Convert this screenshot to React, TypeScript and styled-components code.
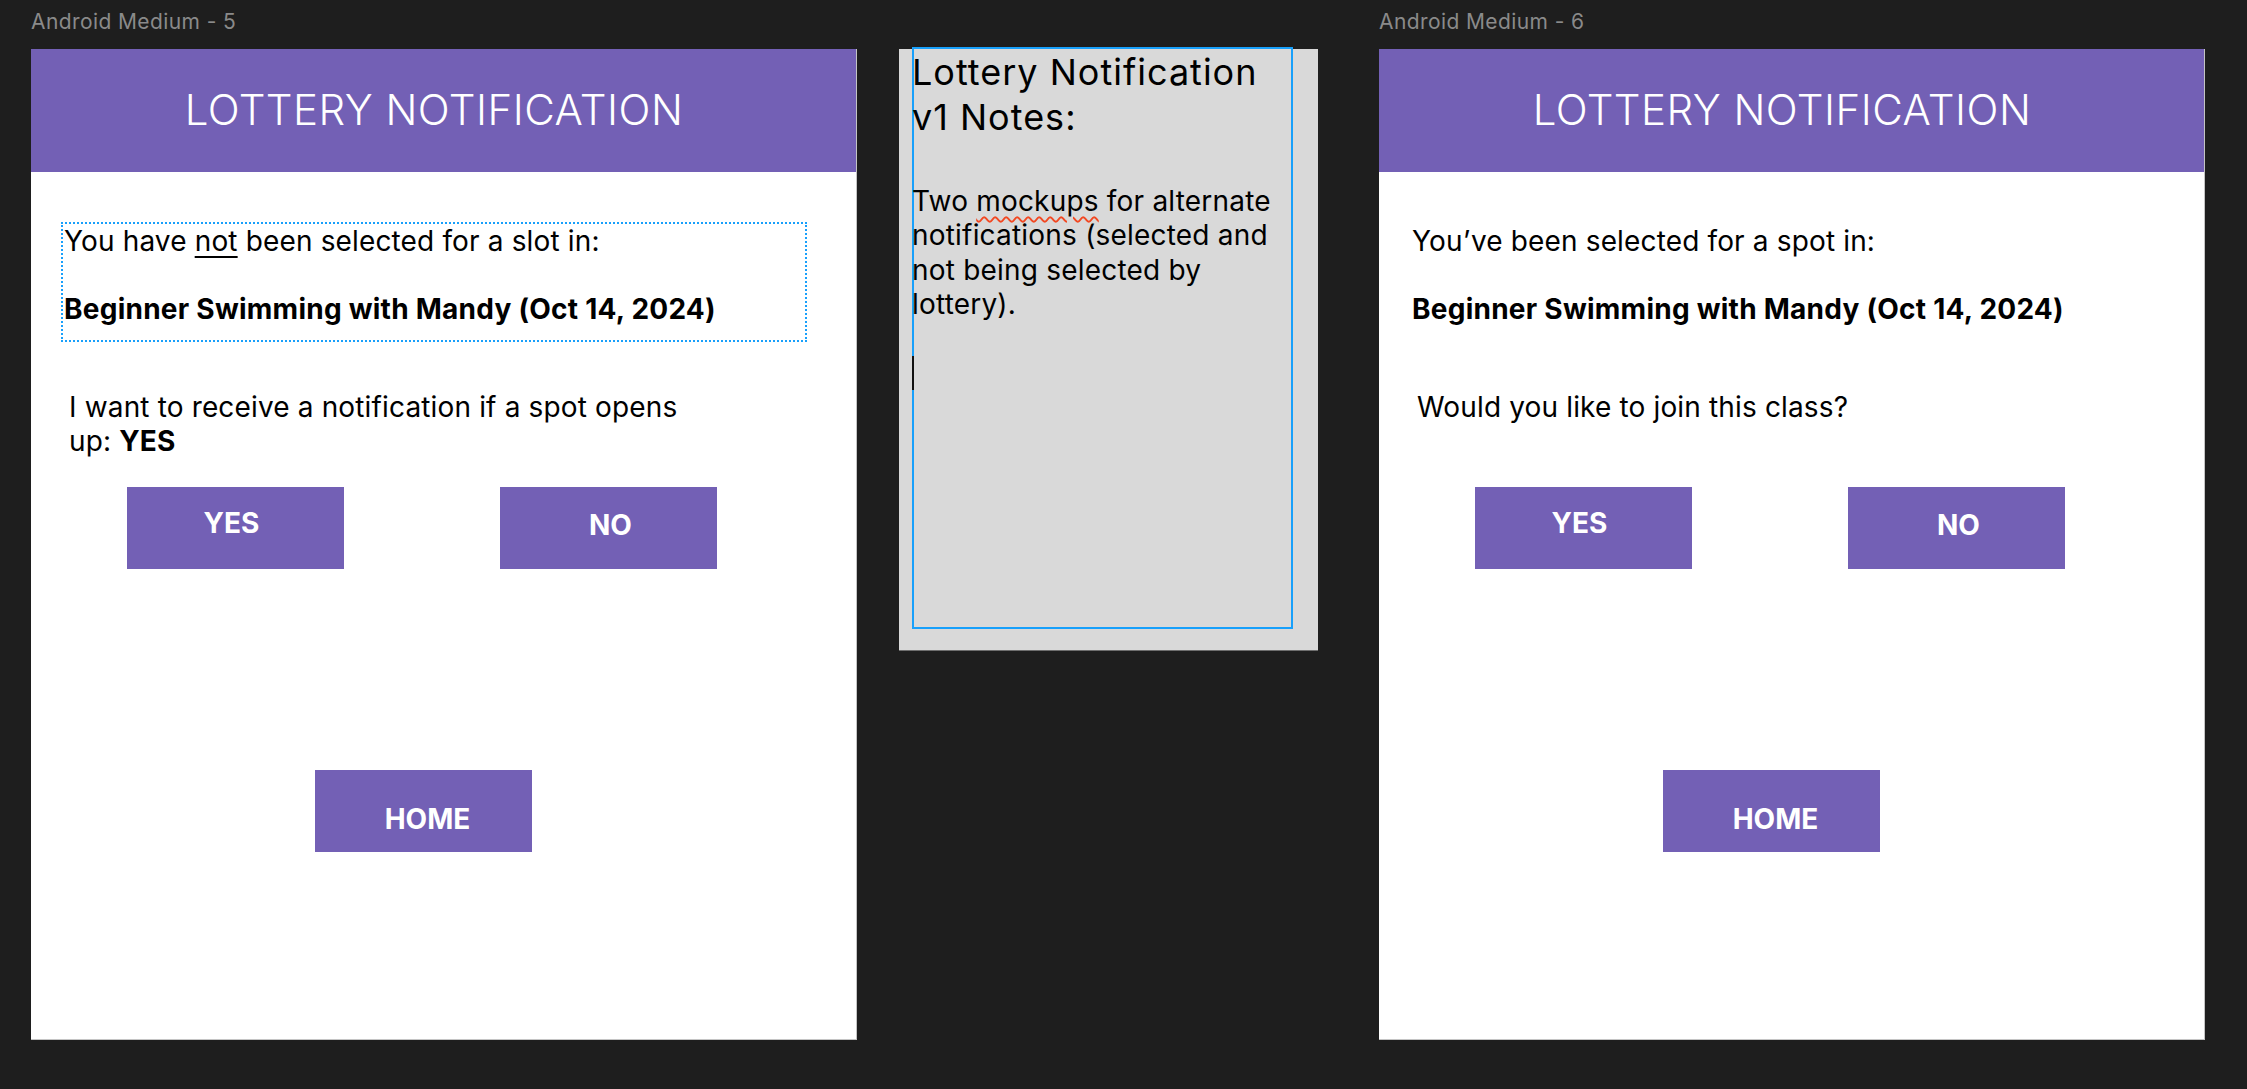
import * as React from 'react';
import styled, { createGlobalStyle } from 'styled-components';

const GlobalStyle = createGlobalStyle`
  html, body {
    margin: 0;
    padding: 0;
    background: #1e1e1e;
  }
  body {
    font-family: Inter, "Noto Sans", sans-serif;
  }
`;

const Canvas = styled.div`
  display: flex;
  align-items: flex-start;
  width: 2247px;
  height: 1089px;
  padding: 9px 0 0 31px;
  box-sizing: border-box;
  overflow: hidden;
`;

const FrameColumn = styled.div<{ $offset?: number }>`
  display: flex;
  flex-direction: column;
  width: 826px;
  margin-left: ${(p) => p.$offset ?? 0}px;
`;

const FrameLabel = styled.div`
  font-size: 21px;
  letter-spacing: 0.4px;
  line-height: 25px;
  color: #8a8a8a;
  margin-bottom: 15px;
`;

const Screen = styled.div`
  display: flex;
  flex-direction: column;
  width: 826px;
  height: 991px;
  background: #fff;
  box-sizing: border-box;
  border-right: 1px solid #c4c4c4;
  border-bottom: 1px solid #c4c4c4;
`;

const AppBar = styled.header`
  display: flex;
  justify-content: center;
  height: 123px;
  padding: 35px 19px 0 0;
  box-sizing: border-box;
  background: #7360b5;
  color: #fff;
  font-size: 42px;
  font-weight: 300;
  letter-spacing: 0.5px;
  line-height: 51px;
`;

const MessageBox = styled.div<{ $selected?: boolean }>`
  margin: 50px 0 0 30px;
  width: 746px;
  height: 120px;
  box-sizing: border-box;
  padding-left: 1px;
  border: 2px dotted ${(p) => (p.$selected ? '#18a0fb' : 'transparent')};
  font-size: 28px;
  letter-spacing: 0.15px;
  line-height: 34px;
  color: #000;
`;

const Plain = styled.p`
  margin: 0;
`;

const Emph = styled.span`
  text-decoration: underline;
  text-decoration-thickness: 2px;
  text-underline-offset: 5px;
`;

const ClassName = styled.p`
  margin: 34px 0 0;
  font-weight: 700;
  letter-spacing: 0.25px;
`;

const Question = styled.p`
  margin: 48px 0 0 38px;
  height: 97px;
  font-size: 28px;
  letter-spacing: 0.15px;
  line-height: 34px;
  color: #000;

  b {
    font-weight: 700;
  }
`;

const ButtonRow = styled.div<{ $top?: number; $left: number }>`
  display: flex;
  gap: 156px;
  margin-top: ${(p) => p.$top ?? 0}px;
  padding-left: ${(p) => p.$left}px;
`;

const ActionButton = styled.button<{ $textTop: number; $nudge?: number }>`
  display: flex;
  justify-content: center;
  align-items: flex-start;
  width: 217px;
  height: 82px;
  box-sizing: border-box;
  padding: ${(p) => p.$textTop}px ${(p) => Math.max(0, -2 * (p.$nudge ?? 0))}px 0
    ${(p) => Math.max(0, 2 * (p.$nudge ?? 0))}px;
  border: none;
  background: #7360b5;
  color: #fff;
  font-family: inherit;
  font-size: 28px;
  font-weight: 700;
  line-height: 34px;
  cursor: pointer;
`;

const NotePanel = styled.div`
  margin: 40px 0 0 42px;
  width: 419px;
  height: 602px;
  padding-left: 13px;
  box-sizing: border-box;
  background: #d9d9d9;
  border-bottom: 1px solid #6e6e6e;
`;

const NoteBox = styled.div`
  margin-top: -2px;
  width: 381px;
  height: 582px;
  padding-top: 3px;
  box-sizing: border-box;
  box-shadow: inset 0 0 0 2px #18a0fb;
  color: #000;
`;

const NoteTitle = styled.h2`
  margin: 0;
  font-size: 36px;
  font-weight: 400;
  letter-spacing: 1px;
  line-height: 45px;
`;

const NoteBody = styled.p`
  margin: 44px 0 0;
  font-size: 28px;
  letter-spacing: 0.2px;
  line-height: 34.4px;
`;

const Misspelled = styled.span`
  text-decoration: underline wavy #f24822;
  text-decoration-thickness: 1.5px;
  text-underline-offset: 5px;
`;

const Caret = styled.span`
  display: block;
  width: 2px;
  height: 34px;
  margin-top: 34px;
  background: #111;
`;

type NotificationProps = {
  label: string;
  selected?: boolean;
  intro: React.ReactNode;
  question: React.ReactNode;
  offset?: number;
};

function NotificationScreen({ label, selected, intro, question, offset }: NotificationProps) {
  return (
    <FrameColumn $offset={offset}>
      <FrameLabel>{label}</FrameLabel>
      <Screen>
        <AppBar>LOTTERY NOTIFICATION</AppBar>
        <MessageBox $selected={selected}>
          <Plain>{intro}</Plain>
          <ClassName>Beginner Swimming with Mandy (Oct 14, 2024)</ClassName>
        </MessageBox>
        <Question>{question}</Question>
        <ButtonRow $left={96}>
          <ActionButton $textTop={19} $nudge={-4}>YES</ActionButton>
          <ActionButton $textTop={21} $nudge={2}>NO</ActionButton>
        </ButtonRow>
        <ButtonRow $top={201} $left={284}>
          <ActionButton $textTop={32} $nudge={4}>HOME</ActionButton>
        </ButtonRow>
      </Screen>
    </FrameColumn>
  );
}

export default function App() {
  return (
    <>
      <GlobalStyle />
      <Canvas>
        <NotificationScreen
          label="Android Medium - 5"
          selected
          intro={
            <>
              You have <Emph>not</Emph> been selected for a slot in:
            </>
          }
          question={
            <>
              I want to receive a notification if a spot opens
              <br />
              up: <b>YES</b>
            </>
          }
        />
        <NotePanel>
          <NoteBox>
            <NoteTitle>
              Lottery Notification
              <br />
              v1 Notes:
            </NoteTitle>
            <NoteBody>
              Two <Misspelled>mockups</Misspelled> for alternate
              <br />
              notifications (selected and
              <br />
              not being selected by
              <br />
              lottery).
            </NoteBody>
            <Caret />
          </NoteBox>
        </NotePanel>
        <NotificationScreen
          label="Android Medium - 6"
          offset={61}
          intro="You’ve been selected for a spot in:"
          question="Would you like to join this class?"
        />
      </Canvas>
    </>
  );
}
